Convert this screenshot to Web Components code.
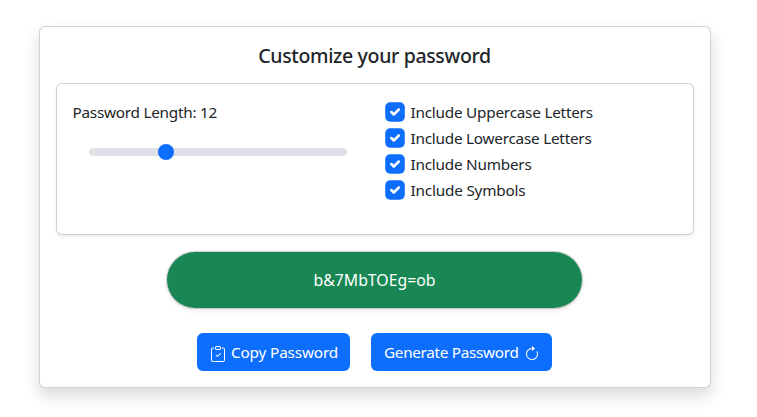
<!DOCTYPE html>
<html lang="en">
<head>
<meta charset="utf-8">
<title>Password Generator</title>
<style>
html,body{margin:0;height:100%;overflow:hidden;background:#fff}
body{font:16px/24px "Noto Sans","Open Sans",sans-serif;color:#212529}
</style>
</head>
<body>
<password-app></password-app>
<script>
const define = (name, html, setup) => customElements.define(name, class extends HTMLElement {
  constructor() {
    super();
    this.attachShadow({mode: 'open'}).innerHTML = html;
  }
  connectedCallback() { if (setup) setup(this, this.shadowRoot); }
});

define('fit-text', `<style>
:host{display:inline-block;white-space:nowrap;line-height:24px}
</style><slot></slot>`, el => {
  el.style.fontSize = el.getAttribute('size') + 'px';
  el.style.letterSpacing = '0px';
  const width = el.getBoundingClientRect().width;
  const target = Number(el.getAttribute('width'));
  el.style.letterSpacing = (target - width) / el.textContent.length + 'px';
});

define('surface-card', `<style>
:host{display:block;box-sizing:border-box;border:1px solid rgba(0,0,0,.176);border-radius:6px;background:#fff}
</style><slot></slot>`);

define('length-slider', `<style>
:host{display:block;padding:16px 16px 0}
.row{display:flex;align-items:center;height:24px;width:258px}
.fill,.rest{height:8px;background:#dee2e6}
.fill{width:69px;border-radius:8px 0 0 8px}
.rest{flex:1;border-radius:0 8px 8px 0}
.thumb{width:16px;height:16px;border-radius:50%;background:#0d6efd}
.wrap{background:linear-gradient(#dee2e6,#dee2e6) center/100% 8px no-repeat;height:16px}
</style><div class="row"><div class="fill"></div><div class="wrap"><div class="thumb"></div></div><div class="rest"></div></div>`);

define('check-option', `<style>
:host{display:flex;align-items:center;height:26px;gap:5.5px}
svg{display:block;width:20px;height:20px}
</style><svg viewBox="0 0 20 20"><rect x=".2" y=".2" width="19.6" height="19.6" rx="5" fill="#0d6efd"/><path d="M6.3 10l2.500 2.500 5-5" fill="none" stroke="#fff" stroke-width="2.5" stroke-linecap="round" stroke-linejoin="round"/></svg><slot></slot>`);

define('app-button', `<style>
:host{display:flex;align-items:center;box-sizing:border-box;height:38px;background:#0d6efd;color:#fff;border-radius:6px;padding:0 13px;gap:5px}
::slotted(svg){display:block;flex:none;width:16px;height:16px;margin-top:3px}
</style><slot></slot>`);

define('password-display', `<style>
:host{display:flex;align-items:center;justify-content:center;box-sizing:border-box;width:417px;height:58px;margin:16px 0 0 110px;border:1px solid rgba(0,0,0,.176);border-radius:50px;background:#198754;background-clip:padding-box;color:#fff;box-shadow:0 2px 4px rgba(0,0,0,.075)}
</style><slot></slot>`);

define('password-app', `<style>
:host{display:block;padding:26px 0 0 39px}
.main{width:672px;height:362px;padding:16px;box-shadow:0 8px 16px rgba(0,0,0,.15)}
h1{margin:0 1px 15px 0;padding-top:1px;font-size:20px;font-weight:500;line-height:24px;height:24px;text-align:center}
.settings{display:grid;grid-template-columns:312px 1fr;height:152px;padding:16px;box-shadow:0 2px 4px rgba(0,0,0,.075)}
.label{height:24px;margin-left:-.5px}
.checks{margin-top:-1px}
.actions{display:flex;margin-top:24px;padding-left:141px;gap:21px}
</style>
<surface-card class="main">
<h1><fit-text size="19.5" width="232.5">Customize your password</fit-text></h1>
<surface-card class="settings">
<div><div class="label"><fit-text size="15.3" width="144.5">Password Length: 12</fit-text></div><length-slider></length-slider></div>
<div class="checks">
<check-option><fit-text size="15.3" width="182.3">Include Uppercase Letters</fit-text></check-option>
<check-option><fit-text size="15.3" width="181">Include Lowercase Letters</fit-text></check-option>
<check-option><fit-text size="15.3" width="121">Include Numbers</fit-text></check-option>
<check-option><fit-text size="15.3" width="115">Include Symbols</fit-text></check-option>
</div>
</surface-card>
<password-display><fit-text size="15.8" width="122">b&amp;7MbTOEg=ob</fit-text></password-display>
<div class="actions">
<app-button style="width:153px"><svg viewBox="0 0 16 16" fill="currentColor"><path fill-rule="evenodd" d="M10.854 7.146a.5.5 0 0 1 0 .708l-3 3a.5.5 0 0 1-.708 0l-1.5-1.5a.5.5 0 1 1 .708-.708L7.5 9.793l2.646-2.647a.5.5 0 0 1 .708 0"/><path d="M4 1.5H3a2 2 0 0 0-2 2V14a2 2 0 0 0 2 2h10a2 2 0 0 0 2-2V3.500a2 2 0 0 0-2-2h-1v1h1a1 1 0 0 1 1 1V14a1 1 0 0 1-1 1H3a1 1 0 0 1-1-1V3.500a1 1 0 0 1 1-1h1z"/><path d="M9.5 1a.5.5 0 0 1 .5.5v1a.5.5 0 0 1-.5.5h-3a.5.5 0 0 1-.5-.5v-1a.5.5 0 0 1 .5-.5zm-3-1A1.500 1.500 0 0 0 5 1.500v1A1.500 1.500 0 0 0 6.500 4h3A1.500 1.500 0 0 0 11 2.500v-1A1.500 1.500 0 0 0 9.500 0z"/></svg><fit-text size="15.3" width="107">Copy Password</fit-text></app-button>
<app-button style="width:181px"><fit-text size="15.3" width="134.5">Generate Password</fit-text><svg viewBox="0 0 16 16" fill="currentColor"><path fill-rule="evenodd" d="M8 3a5 5 0 1 0 4.546 2.914.5.5 0 0 1 .908-.417A6 6 0 1 1 8 2z"/><path d="M8 4.466V.534a.25.25 0 0 1 .41-.192l2.360 1.966c.12.1.12.284 0 .384L8.410 4.658A.25.25 0 0 1 8 4.466"/></svg></app-button>
</div>
</surface-card>`);
</script>
</body>
</html>
